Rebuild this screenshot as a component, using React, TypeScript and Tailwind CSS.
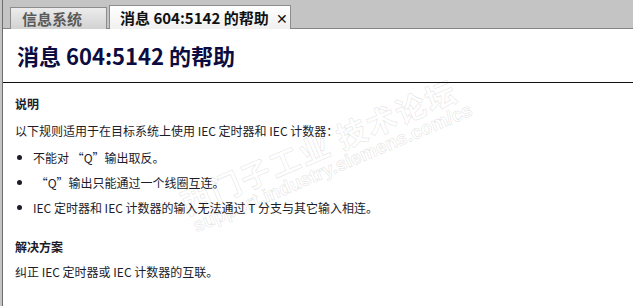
import React from "react";

const cjk = { fontFamily: '"Noto Sans CJK SC", "Noto Sans", sans-serif' };

const bullets = [
  "不能对 “Q”输出取反。",
  " “Q”输出只能通过一个线圈互连。",
  "IEC 定时器和 IEC 计数器的输入无法通过 T 分支与其它输入相连。",
];

export default function App() {
  return (
    <div className="relative w-[633px] h-[306px] overflow-hidden bg-white flex" style={cjk}>
      {/* left frame strip */}
      <div className="w-[3px] h-full bg-[#c4c4c4] border-r border-[#6e6e6e] shrink-0" />

      <div className="flex-1 flex flex-col min-w-0">
        {/* tab bar */}
        <div className="h-[29px] bg-[#c4c4c4] border-b border-[#858585] flex items-end pl-[7px] gap-[2px] shrink-0">
          <div className="h-[22px] w-[97px] mb-[-1px] border border-[#8c8c8c] border-b-0 bg-gradient-to-b from-[#ececec] to-[#d2d2d2] flex items-center pl-[11px] text-[15px] font-bold text-[#5a5a5a] leading-none">
            信息系统
          </div>
          <div className="h-[24px] w-[182px] mb-[-1px] border border-[#8c8c8c] border-b-0 bg-gradient-to-b from-white to-[#f0f0f0] flex items-center pl-[10px] gap-[7px] text-[15px] font-bold text-[#111] leading-none">
            <span>消息 604:5142 的帮助</span>
            <span className="text-[14px] font-normal">✕</span>
          </div>
        </div>

        {/* page content */}
        <div className="flex-1 flex flex-col">
          <div className="h-[54px] border-b border-[#111] flex items-center pl-[14px] pb-[2px]">
            <h1 className="text-[22px] font-bold text-[#0c0c40] leading-none">消息 604:5142 的帮助</h1>
          </div>

          <div className="pl-[12px] pt-[8px] text-[12px] text-[#1c1c2a] leading-none">
            <div className="font-bold h-[26px] flex items-center">说明</div>
            <div className="h-[28px] flex items-center">以下规则适用于在目标系统上使用 IEC 定时器和 IEC 计数器：</div>
            {bullets.map((b, i) => (
              <div key={i} className="h-[25px] flex items-center">
                <span className="w-[5px] h-[5px] rounded-full bg-[#1c1c2a] ml-[2px] mr-[11px] shrink-0" />
                <span className="whitespace-pre">{b}</span>
              </div>
            ))}
            <div className="font-bold h-[26px] flex items-center mt-[14px]">解决方案</div>
            <div className="h-[24px] flex items-center">纠正 IEC 定时器或 IEC 计数器的互联。</div>
          </div>
        </div>
      </div>

      {/* faint forum watermark lying over the text */}
      <div className="absolute left-[176px] top-[190px] -rotate-[23deg] origin-top-left pointer-events-none select-none leading-none text-transparent [-webkit-text-stroke:1px_rgba(0,0,0,0.09)]">
        <div className="text-[30px] font-bold tracking-[2px] whitespace-nowrap">西门子工业 技术论坛</div>
        <div className="text-[19px] font-bold mt-[1px] ml-[2px] whitespace-nowrap" style={{ fontFamily: '"Liberation Sans", sans-serif' }}>
          support.industry.siemens.com/cs
        </div>
      </div>
    </div>
  );
}
